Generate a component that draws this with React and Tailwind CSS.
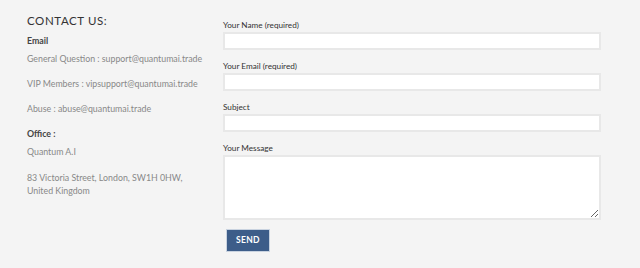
import React from "react";

const emails = [
  "General Question : support@quantumai.trade",
  "VIP Members : vipsupport@quantumai.trade",
  "Abuse : abuse@quantumai.trade",
];

function Field({ label, area }) {
  return (
    <div className="flex flex-col">
      <label className="text-[8.2px] leading-[10px] text-[#333] mb-[2px]">{label}</label>
      {area ? (
        <textarea className="h-[65px] w-full bg-white border-2 border-[#e8e8e8] resize-y" />
      ) : (
        <input className="h-[18px] w-full bg-white border-2 border-[#e8e8e8]" />
      )}
    </div>
  );
}

export default function App() {
  return (
    <div
      className="w-[640px] h-[268px] bg-[#f4f4f4] flex pl-[27px] pt-[13px]"
      style={{ fontFamily: "Lato, 'Open Sans', sans-serif" }}
    >
      <div className="w-[196px] flex flex-col">
        <h2 className="text-[11.5px] leading-[16px] tracking-[0.6px] text-[#333] font-normal">CONTACT US:</h2>
        <div className="mt-[5px] text-[8.8px] leading-[13px] font-bold text-[#444]">Email</div>
        <div className="mt-[5px] flex flex-col gap-[12px] text-[8.8px] leading-[13px] text-[#888]">
          {emails.map((e) => (
            <p key={e}>{e}</p>
          ))}
        </div>
        <div className="mt-[12px] text-[8.8px] leading-[13px] font-bold text-[#444]">Office :</div>
        <p className="mt-[5px] text-[8.8px] leading-[13px] text-[#888]">Quantum A.I</p>
        <p className="mt-[13px] text-[8.8px] leading-[13px] text-[#888]">
          83 Victoria Street, London, SW1H 0HW,
          <br />
          United Kingdom
        </p>
      </div>
      <div className="w-[378px] flex flex-col pt-[7px] gap-[11px]">
        <Field label="Your Name (required)" />
        <Field label="Your Email (required)" />
        <Field label="Subject" />
        <Field label="Your Message" area />
        <button className="-mt-[2px] ml-[3px] w-[44px] h-[23px] flex items-center justify-center bg-[#3d5d89] border border-[#c9d3e0] text-white text-[8.5px] font-bold tracking-[0.3px]">
          SEND
        </button>
      </div>
    </div>
  );
}
